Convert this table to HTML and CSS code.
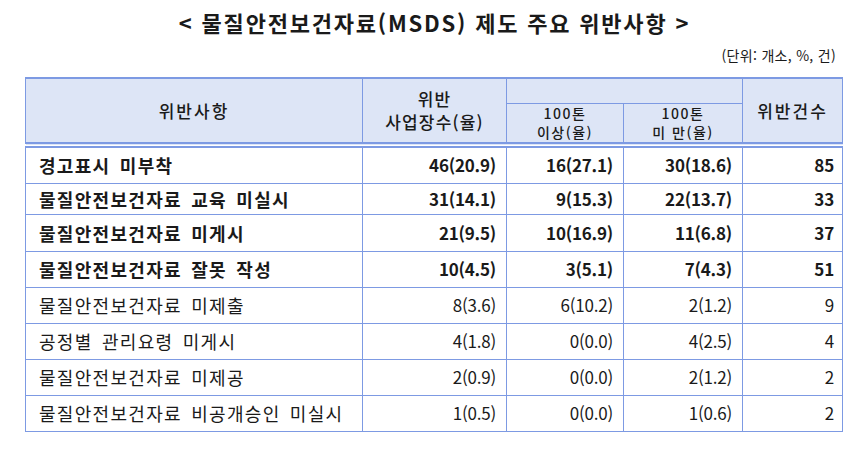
FILE: index.html
```html
<!DOCTYPE html>
<html lang="ko">
<head>
<meta charset="utf-8">
<link rel="stylesheet" href="styles.css">
</head>
<body>
<div class="page">
  <h1 class="title">&lt; 물질안전보건자료(MSDS) 제도 주요 위반사항 &gt;</h1>
  <div class="unit">(단위: 개소, %, 건)</div>
  <table class="grid">
    <colgroup>
      <col class="c1"><col class="c2"><col class="c3"><col class="c4"><col class="c5">
    </colgroup>
    <thead>
      <tr class="h1">
        <th rowspan="2" class="hd">위반사항</th>
        <th rowspan="2" class="hd hd2">위반<br>사업장수(율)</th>
        <th colspan="2" class="empty"></th>
        <th rowspan="2" class="hd">위반건수</th>
      </tr>
      <tr class="h2">
        <th class="sub">100톤<br>이상(율)</th>
        <th class="sub">100톤<br>미 만(율)</th>
      </tr>
    </thead>
    <tbody>
      <tr class="b r1"><td>경고표시 미부착</td><td>46(20.9)</td><td>16(27.1)</td><td>30(18.6)</td><td>85</td></tr>
      <tr class="b r2"><td>물질안전보건자료 교육 미실시</td><td>31(14.1)</td><td>9(15.3)</td><td>22(13.7)</td><td>33</td></tr>
      <tr class="b r3"><td>물질안전보건자료 미게시</td><td>21(9.5)</td><td>10(16.9)</td><td>11(6.8)</td><td>37</td></tr>
      <tr class="b"><td>물질안전보건자료 잘못 작성</td><td>10(4.5)</td><td>3(5.1)</td><td>7(4.3)</td><td>51</td></tr>
      <tr><td>물질안전보건자료 미제출</td><td>8(3.6)</td><td>6(10.2)</td><td>2(1.2)</td><td>9</td></tr>
      <tr><td>공정별 관리요령 미게시</td><td>4(1.8)</td><td>0(0.0)</td><td>4(2.5)</td><td>4</td></tr>
      <tr><td>물질안전보건자료 미제공</td><td>2(0.9)</td><td>0(0.0)</td><td>2(1.2)</td><td>2</td></tr>
      <tr><td>물질안전보건자료 비공개승인 미실시</td><td>1(0.5)</td><td>0(0.0)</td><td>1(0.6)</td><td>2</td></tr>
    </tbody>
  </table>
</div>
</body>
</html>
```
FILE: styles.css
```css
html, body {
  margin: 0;
  padding: 0;
  background: #ffffff;
}
body {
  font-family: "Noto Sans CJK KR", "Noto Sans", sans-serif;
  color: #1a1a1a;
}
.page {
  width: 867px;
  padding-top: 8px;
}
.title {
  margin: 0;
  text-align: center;
  font-size: 22px;
  font-weight: 700;
  letter-spacing: 1.8px;
  line-height: 28px;
  height: 28px;
  padding-left: 2px;
}
.unit {
  text-align: right;
  font-size: 14px;
  letter-spacing: 0.3px;
  line-height: 20px;
  margin-top: 9px;
  padding-right: 31px;
  height: 20px;
}
.grid {
  margin-top: 12px;
  margin-left: 25px;
  width: 817px;
  border-collapse: collapse;
  table-layout: fixed;
}
.c1 { width: 337px; }
.c2 { width: 144px; }
.c3 { width: 117px; }
.c4 { width: 119px; }
.c5 { width: 100px; }
.grid th, .grid td {
  border: 1px solid #7d9ae3;
  padding: 0;
}
.grid th {
  background: #dde5f6;
  font-weight: 500;
  text-align: center;
}
.grid thead tr.h1 th {
  border-top: 2px solid #7d9ae3;
}
.grid th.hd, .grid th.sub {
  border-bottom: 6px double #7d9ae3;
}
.h1 { height: 25px; }
.h2 { height: 38px; }
.hd {
  font-size: 17px;
  letter-spacing: 2px;
  line-height: 23px;
}
.hd2 {
  padding-top: 2px;
  letter-spacing: 1.2px;
}
.sub {
  font-size: 14px;
  letter-spacing: 1.5px;
  line-height: 19px;
  font-weight: 400;
}
.grid td {
  height: 35px;
  font-size: 17px;
  line-height: 20px;
  text-align: right;
  padding-right: 10px;
  letter-spacing: -0.2px;
}
.grid td:first-child {
  text-align: left;
  padding-left: 13px;
  padding-right: 0;
  font-size: 18px;
  letter-spacing: 1.3px;
  word-spacing: 3px;
}
.grid td:last-child {
  padding-right: 8px;
}
.grid tr.b td {
  font-weight: 700;
}
.grid tr.r2 td {
  height: 30px;
}
.grid tr.r3 td {
  height: 36px;
}
```
